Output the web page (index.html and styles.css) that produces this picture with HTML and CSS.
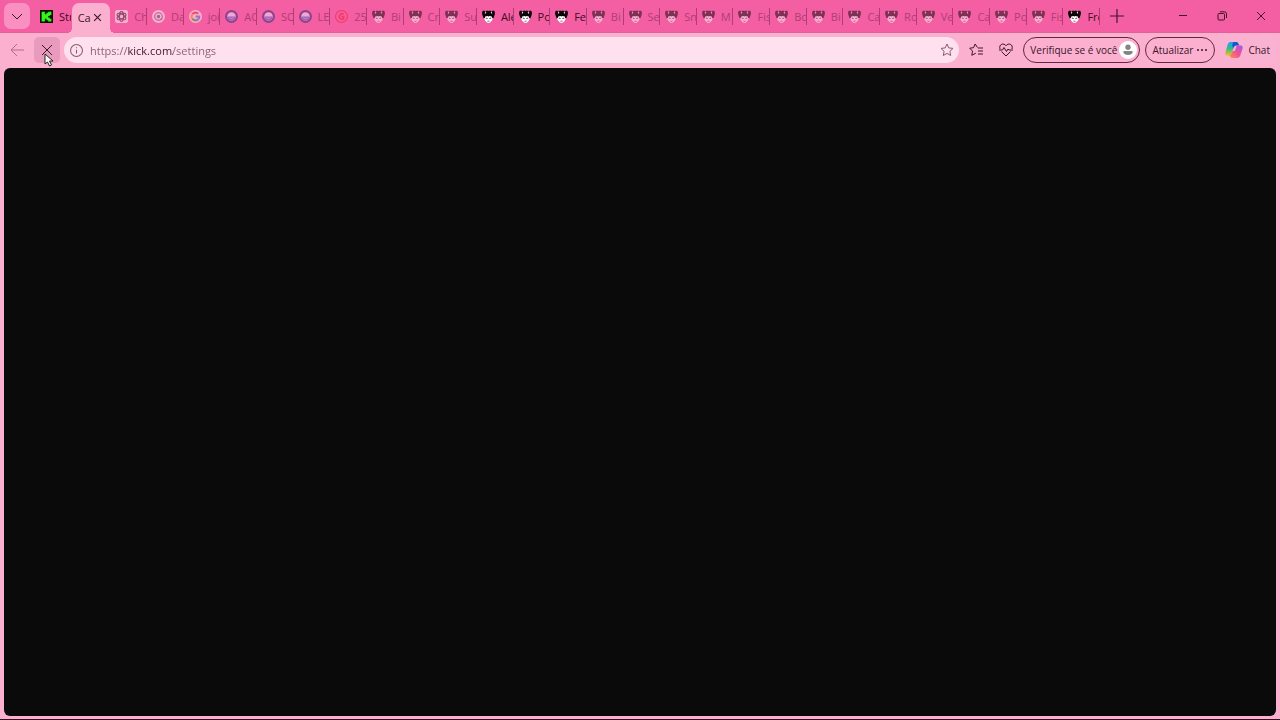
FILE: index.html
```html
<!DOCTYPE html>
<html lang="pt-BR">
<head>
  <meta charset="UTF-8">
  <meta name="viewport" content="width=device-width, initial-scale=1.0">
  <title>Kick</title>
  <link rel="stylesheet" href="styles.css">
</head>
<body>

  <!-- Shared icons -->
  <svg class="sprite" aria-hidden="true">
    <symbol id="mascot" viewBox="0 0 24 24">
      <path fill="#fff" d="M4 9h16v7l-2 4-3 3-3 1-3-1-3-3-2-4z"/>
      <path fill="#0b0408" d="M1 2l3-1 2 2 3-2 3 1 3-1 3 2 2-2 3 1 1 4-1 4-2 5-2 0-1-3-4-1-2 1-2-1-4 1-1 3-2 0-2-5-1-4z"/>
      <path fill="#e9c9d8" d="M6 3l2 1-1 3-2-1zM18 3l-2 1 1 3 2-1z"/>
      <path fill="#55404a" d="M7 14l4 1v1H7zM17 14l-4 1v1h4zM10 20h4v1h-4z"/>
    </symbol>
    <symbol id="robot" viewBox="0 0 24 24">
      <circle cx="12" cy="12" r="12" fill="#252a78"/>
      <circle cx="12" cy="12" r="8" fill="#f4ecff"/>
      <path fill="#5b62c0" d="M4 12h16a8 8 0 0 1-16 0z"/>
      <path fill="none" stroke="#fff" stroke-width="1" d="M8 14q4 4 8 0"/>
    </symbol>
  </svg>

  <!-- Tab strip -->
  <header class="tab-strip">
    <button class="tab-search" aria-label="Pesquisar guias">
      <svg class="icon" viewBox="0 0 12 12"><path d="M1 4l5 5 5-5"/></svg>
    </button>
    <nav class="tabs">
      <button class="tab first awake">
        <svg class="favicon" viewBox="0 0 24 24"><path fill="#071404" d="M0 0h24v24H0z"/><path fill="#35f51c" d="M3 3h6v5h3V5h3V3h6v6h-3v2h-3v3h3v2h3v5h-6v-2h-3v-3H9v5H3z"/></svg>
        <span>Str</span>
      </button>
      <div class="tab active">
        <span>Ca</span>
        <button class="close" aria-label="Fechar guia"><svg class="icon" viewBox="0 0 8 8"><path d="M1 1l6 6M7 1L1 7"/></svg></button>
      </div>
      <button class="tab">
        <svg class="favicon" viewBox="0 0 24 24"><rect width="24" height="24" rx="4" fill="#fff"/><g fill="none" stroke="#333" stroke-width="2"><ellipse cx="12" cy="12" rx="4" ry="9"/><ellipse cx="12" cy="12" rx="4" ry="9" transform="rotate(60 12 12)"/><ellipse cx="12" cy="12" rx="4" ry="9" transform="rotate(120 12 12)"/></g></svg>
        <span>Ch</span>
      </button>
      <button class="tab">
        <svg class="favicon" viewBox="0 0 24 24"><circle cx="12" cy="12" r="12" fill="#fff"/><circle cx="12" cy="12" r="7" fill="none" stroke="#667" stroke-width="2"/><rect x="9" y="9" width="6" height="6" rx="2" fill="#667"/><path d="M16 16l3 2" stroke="#667" stroke-width="2"/></svg>
        <span>Da</span>
      </button>
      <button class="tab">
        <svg class="favicon" viewBox="0 0 24 24"><circle cx="12" cy="12" r="12" fill="#fff"/><g fill="none" stroke-width="4"><path stroke="#ea4335" d="M6 8a7 7 0 0 1 11-1"/><path stroke="#fbbc05" d="M6 8a7 7 0 0 0 0 8"/><path stroke="#34a853" d="M6 16a7 7 0 0 0 11 1"/><path stroke="#4285f4" d="M17 17a7 7 0 0 0 2-5h-7"/></g></svg>
        <span>joi</span>
      </button>
      <button class="tab"><svg class="favicon"><use href="#robot"/></svg><span>AO</span></button>
      <button class="tab"><svg class="favicon"><use href="#robot"/></svg><span>SO</span></button>
      <button class="tab"><svg class="favicon"><use href="#robot"/></svg><span>LE</span></button>
      <button class="tab">
        <svg class="favicon" viewBox="0 0 24 24"><g fill="none" stroke="#f01822" stroke-width="2"><circle cx="12" cy="12" r="11"/><path stroke-width="3" d="M16 8a5 5 0 1 0 0 8v-4h-4"/></g></svg>
        <span>25</span>
      </button>
      <button class="tab"><svg class="favicon"><use href="#mascot"/></svg><span>Bi</span></button>
      <button class="tab"><svg class="favicon"><use href="#mascot"/></svg><span>Cr</span></button>
      <button class="tab"><svg class="favicon"><use href="#mascot"/></svg><span>Su</span></button>
      <button class="tab awake"><svg class="favicon"><use href="#mascot"/></svg><span>Ale</span></button>
      <button class="tab awake"><svg class="favicon"><use href="#mascot"/></svg><span>Po</span></button>
      <button class="tab awake"><svg class="favicon"><use href="#mascot"/></svg><span>Fe</span></button>
      <button class="tab"><svg class="favicon"><use href="#mascot"/></svg><span>Bi</span></button>
      <button class="tab"><svg class="favicon"><use href="#mascot"/></svg><span>Se</span></button>
      <button class="tab"><svg class="favicon"><use href="#mascot"/></svg><span>Sn</span></button>
      <button class="tab"><svg class="favicon"><use href="#mascot"/></svg><span>M</span></button>
      <button class="tab"><svg class="favicon"><use href="#mascot"/></svg><span>Fis</span></button>
      <button class="tab"><svg class="favicon"><use href="#mascot"/></svg><span>Bo</span></button>
      <button class="tab"><svg class="favicon"><use href="#mascot"/></svg><span>Bi</span></button>
      <button class="tab"><svg class="favicon"><use href="#mascot"/></svg><span>Ca</span></button>
      <button class="tab"><svg class="favicon"><use href="#mascot"/></svg><span>Ro</span></button>
      <button class="tab"><svg class="favicon"><use href="#mascot"/></svg><span>Ve</span></button>
      <button class="tab"><svg class="favicon"><use href="#mascot"/></svg><span>Ca</span></button>
      <button class="tab"><svg class="favicon"><use href="#mascot"/></svg><span>Po</span></button>
      <button class="tab"><svg class="favicon"><use href="#mascot"/></svg><span>Fis</span></button>
      <button class="tab awake"><svg class="favicon"><use href="#mascot"/></svg><span>Fre</span></button>
    </nav>
    <button class="new-tab" aria-label="Nova guia">
      <svg class="icon" viewBox="0 0 12 12"><path d="M6 0v12M0 6h12"/></svg>
    </button>
    <div class="window-controls">
      <button aria-label="Minimizar"><svg class="icon" viewBox="0 0 10 10"><path d="M1 4.500h8"/></svg></button>
      <button aria-label="Restaurar"><svg class="icon" viewBox="0 0 10 10"><rect x="1" y="2.500" width="6.500" height="6.500" rx="1"/><path d="M3 .8h4.500a2 2 0 0 1 2 2V7"/></svg></button>
      <button aria-label="Fechar"><svg class="icon" viewBox="0 0 10 10"><path d="M1 1l8 8M9 1L1 9"/></svg></button>
    </div>
  </header>

  <!-- Toolbar -->
  <div class="toolbar">
    <button class="tool back" aria-label="Voltar">
      <svg class="icon" viewBox="0 0 14 14"><path d="M14 7H1M7 1L1 7l6 6"/></svg>
    </button>
    <button class="tool stop" aria-label="Parar">
      <svg class="icon" viewBox="0 0 12 12"><path d="M1 1l10 10M11 1L1 11"/></svg>
      <svg class="cursor" viewBox="0 0 10 14"><path fill="#fff" stroke="#222" d="M1 1v10l2.500-2 2 4 2-1-2-4H9z"/></svg>
    </button>
    <div class="address-bar">
      <svg class="icon info" viewBox="0 0 12 12"><circle cx="6" cy="6" r="5.500"/><path d="M6 5.300v3.500M6 3v1"/></svg>
      <input class="url" type="text" aria-label="Endereço" value="https://kick.com/settings">
      <button class="favorite" aria-label="Adicionar aos favoritos">
        <svg class="icon" viewBox="0 0 14 14"><path d="M7 1l1.800 3.900 4.200.5-3.100 2.900.8 4.200L7 10.400l-3.700 2.100.8-4.200L1 5.400l4.200-.5z"/></svg>
      </button>
    </div>
    <button class="tool" aria-label="Favoritos">
      <svg class="icon" viewBox="0 0 14 14"><path d="M8.500 4.500L6.200 1 4.500 4.700.7 5.200l2.800 2.900-.7 4.200 4-2.100M9 5h5M9 8h5M9 11h5"/></svg>
    </button>
    <button class="tool" aria-label="Essenciais do navegador">
      <svg class="icon" viewBox="0 0 14 14"><path d="M1 6C-.5 1 5-.5 7 2.800 9-.5 14.500 1 13 6M2.500 8.500L7 13l4.500-4.500M0 7h3.500l1.500-2.500 2.500 4L9 6l1 1h4"/></svg>
    </button>
    <div class="actions">
      <button class="pill profile">
        Verifique se é você
        <svg class="avatar" viewBox="0 0 20 20"><circle cx="10" cy="10" r="10" fill="#fff"/><circle cx="10" cy="7" r="3" fill="#858585"/><path fill="#858585" d="M5 11h10v1.500c0 4-10 4-10 0z"/></svg>
      </button>
      <button class="pill update">
        Atualizar
        <svg class="dots" viewBox="0 0 12 4"><circle cx="2" cy="2" r="1"/><circle cx="6" cy="2" r="1"/><circle cx="10" cy="2" r="1"/></svg>
      </button>
      <button class="chat">
        <svg class="copilot" viewBox="0 0 20 20">
          <defs>
            <linearGradient id="cool" x1="0" y1="0" x2="0" y2="1"><stop stop-color="#18a6ed"/><stop offset=".5" stop-color="#35b990"/><stop offset="1" stop-color="#f1c50a"/></linearGradient>
            <linearGradient id="warm" x1="1" y1="0" x2="0" y2="1"><stop stop-color="#a653ed"/><stop offset=".5" stop-color="#ee5394"/><stop offset="1" stop-color="#ff9445"/></linearGradient>
          </defs>
          <path fill="url(#cool)" d="M6 1h6L8 12c-1 3-2 4-4 4H3c-3 0-3-2-2-5l2-7c1-2 1-3 3-3z"/>
          <path fill="#1756cf" d="M9 1h4c2 0 2 4 4 4h-4c-2 0-3 1-4 3L8 5z"/>
          <path fill="url(#warm)" d="M13 5h4c3 0 3 2 2 5l-2 6c-1 2-2 3-4 3H8c-2 0-2-3-4-3 2 0 3-1 4-4l1-1h2l2-6z"/>
        </svg>
        Chat
      </button>
    </div>
  </div>

  <main class="page"></main>

</body>
</html>
```

FILE: styles.css
```css
* {
  margin: 0;
  padding: 0;
  box-sizing: border-box;
}

body {
  display: flex;
  flex-direction: column;
  height: 100vh;
  overflow: hidden;
  background-color: #fbb0d0;
  border-bottom: 1px solid #35101f;
  font-family: "Open Sans", "Noto Sans", sans-serif;
  font-size: 10px;
  color: #3c1529;
}

button {
  border: none;
  background: none;
  font: inherit;
  color: inherit;
}

.sprite {
  display: none;
}

.icon {
  fill: none;
  stroke: currentColor;
  stroke-width: 1;
  width: 14px;
  height: 14px;
  flex-shrink: 0;
}

/* Tab strip */
.tab-strip {
  display: flex;
  align-items: center;
  height: 33px;
  padding-left: 4px;
  background-color: #f45fa3;
  border-bottom: 1px solid #e0609a;
}

.tab-search {
  display: flex;
  align-items: center;
  justify-content: center;
  flex-shrink: 0;
  width: 26px;
  height: 26px;
  border-radius: 7px;
  background-color: #fa8fc1;
}

.tab-search .icon {
  width: 12px;
  height: 12px;
}

.tabs {
  display: flex;
  flex: 1;
  min-width: 0;
  height: 33px;
  padding-left: 5px;
  align-items: center;
}

.tab {
  display: flex;
  align-items: center;
  flex: 1 1 0;
  min-width: 0;
  height: 17px;
  padding-left: 5px;
  gap: 6px;
  overflow: hidden;
  border-right: 1px solid #ae3e73;
  color: #ae3e73;
  font-size: 11px;
}

.tab.first {
  border-right-color: transparent;
}

.tab.awake {
  color: #3c0c24;
}

.tab span {
  white-space: nowrap;
}

.favicon {
  width: 13px;
  height: 13px;
  flex-shrink: 0;
  opacity: 0.5;
}

.awake .favicon {
  opacity: 1;
}

/* Selected tab joins the toolbar below it */
.tab.active {
  position: relative;
  align-self: flex-end;
  flex-basis: 8px;
  height: 30px;
  padding-left: 6px;
  gap: 1px;
  overflow: visible;
  border: none;
  border-radius: 7px 7px 0 0;
  background-color: #fbb0d0;
  color: #3c1529;
}

.tab.active::before,
.tab.active::after {
  content: "";
  position: absolute;
  bottom: 0;
  width: 5px;
  height: 5px;
}

.tab.active::before {
  right: 100%;
  background: radial-gradient(circle at 0 0, transparent 5px, #fbb0d0 5px);
}

.tab.active::after {
  left: 100%;
  background: radial-gradient(circle at 100% 0, transparent 5px, #fbb0d0 5px);
}

.close {
  display: flex;
  padding: 1px;
}

.close .icon {
  width: 9px;
  height: 9px;
}

.new-tab {
  display: flex;
  align-items: center;
  justify-content: center;
  flex-shrink: 0;
  width: 34px;
  height: 32px;
  margin-right: 29px;
}

.window-controls {
  display: flex;
  flex-shrink: 0;
}

.window-controls button {
  display: flex;
  align-items: center;
  justify-content: center;
  width: 39px;
  height: 32px;
}

.window-controls .icon {
  width: 10px;
  height: 10px;
}

/* Toolbar */
.toolbar {
  display: flex;
  align-items: center;
  height: 34px;
  padding: 0 4px;
  gap: 4px;
}

.tool {
  display: flex;
  align-items: center;
  justify-content: center;
  flex-shrink: 0;
  width: 26px;
  height: 26px;
  border-radius: 5px;
}

.back {
  color: #b36a8c;
}

.stop {
  position: relative;
  background-color: #e99bbd;
}

.stop .icon {
  width: 12px;
  height: 12px;
}

.cursor {
  position: absolute;
  left: 10px;
  top: 16px;
  width: 10px;
  height: 14px;
}

.address-bar {
  display: flex;
  align-items: center;
  flex: 1;
  min-width: 0;
  height: 26px;
  padding: 0 5px 0 6px;
  gap: 7px;
  border-radius: 13px;
  background-color: #fee0ee;
  color: #885d72;
}

.info {
  width: 13px;
  height: 13px;
}

/* The host name is darker than the rest of the address */
.url {
  flex: 1;
  min-width: 0;
  border: none;
  outline: none;
  font: inherit;
  font-size: 11px;
  color: transparent;
  background: linear-gradient(to right, #885d72 38px, #3c1529 38px, #3c1529 83px, #885d72 83px);
  -webkit-background-clip: text;
  background-clip: text;
}

.favorite {
  display: flex;
}

.actions {
  display: flex;
  gap: 5px;
}

.pill {
  display: flex;
  align-items: center;
  height: 26px;
  padding: 0 6px;
  border: 1px solid #62273f;
  border-radius: 13px;
  white-space: nowrap;
}

.profile {
  padding-right: 2px;
  gap: 2px;
}

.avatar {
  width: 18px;
  height: 18px;
}

.update {
  gap: 3px;
}

.dots {
  width: 12px;
  height: 4px;
  fill: currentColor;
}

.chat {
  display: flex;
  align-items: center;
  height: 26px;
  padding: 0 6px 0 5px;
  gap: 5px;
  border-radius: 7px;
  background-color: #f9b2d2;
}

.copilot {
  width: 18px;
  height: 18px;
}

/* Page content */
.page {
  flex: 1;
  margin: 1px 4px 3px;
  border-radius: 6px;
  background-color: #0a0a0a;
}
```
